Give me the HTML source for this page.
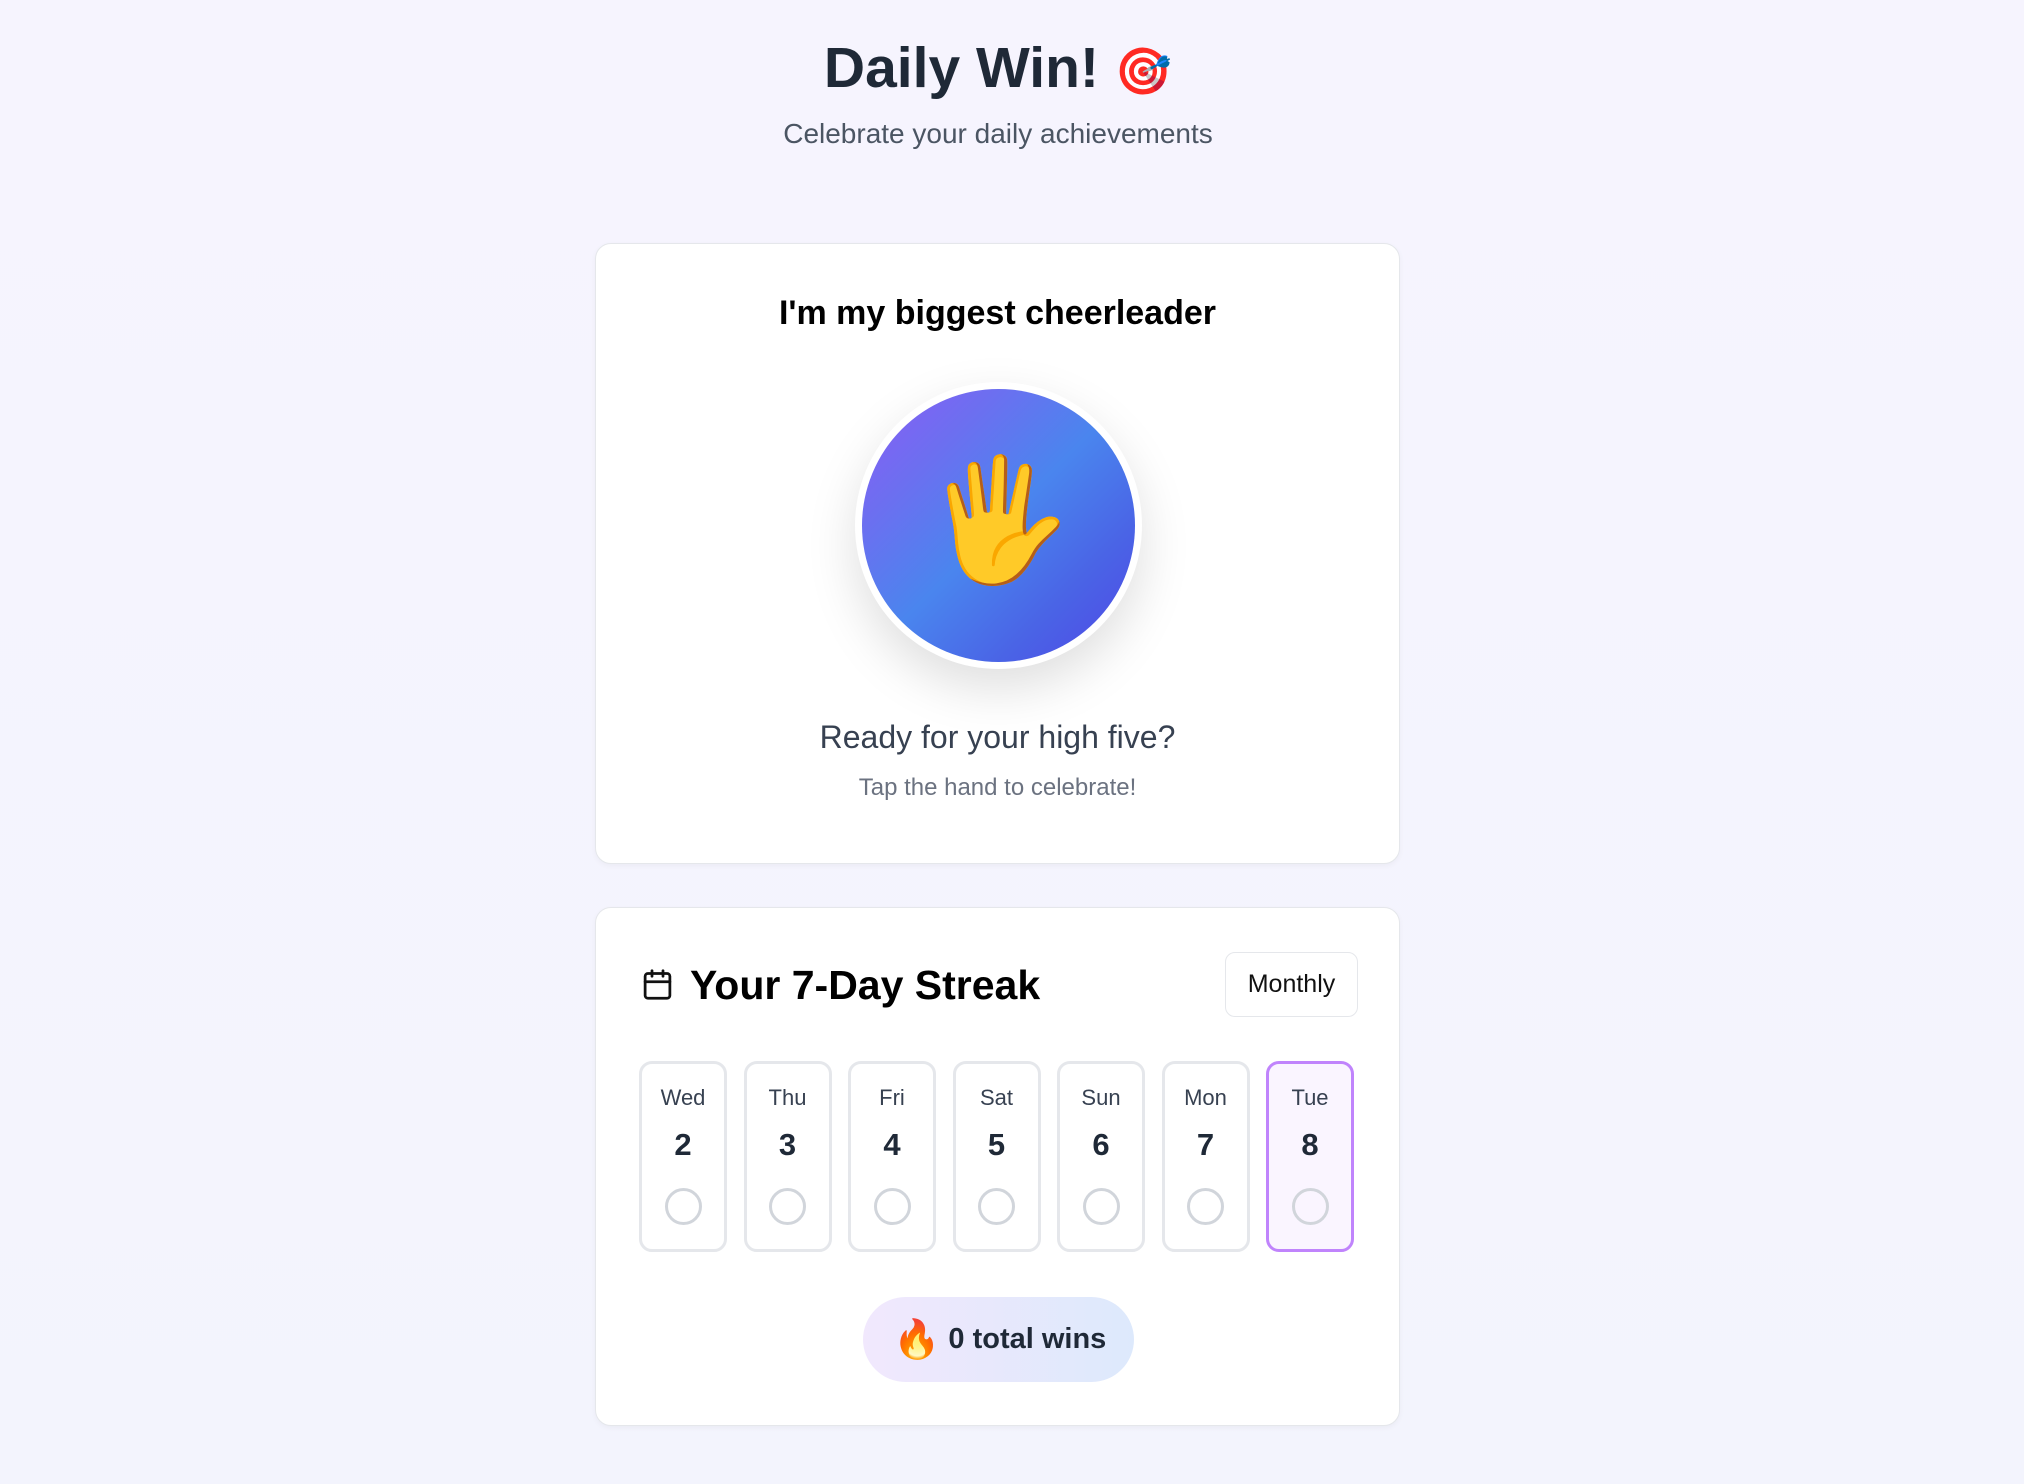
<!DOCTYPE html>
<html><head><meta charset="utf-8"><style>
*{box-sizing:border-box;margin:0;padding:0}
html,body{width:2024px;height:1484px;overflow:hidden}
body{background:linear-gradient(180deg,#f6f4fe 0%,#f3f4fd 100%);font-family:"Liberation Sans","Noto Sans CJK JP",sans-serif;position:relative}
.abs{position:absolute}
.c{text-align:center}
.card{position:absolute;left:595px;width:805px;background:#fff;border:1.5px solid #e5e7eb;border-radius:16px;box-shadow:0 2px 6px rgba(0,0,0,0.04)}
.cell{position:absolute;top:153px;width:88px;height:191px;border:3px solid #e5e7eb;border-radius:13px;background:#fff}
.cell .d{position:absolute;top:21px;width:100%;text-align:center;font-size:22px;color:#374151}
.cell .n{position:absolute;top:63px;width:100%;text-align:center;font-size:31px;font-weight:bold;color:#1f2937}
.cell .o{position:absolute;top:124px;left:50%;margin-left:-18.5px;width:37px;height:37px;border:3px solid #d1d5db;border-radius:50%}
</style></head><body>
<div class="abs c" style="left:0;width:1996px;top:32px;font-size:57px;font-weight:bold;color:#1f2937;line-height:72px">Daily Win! <span style="font-size:46px">🎯</span></div>
<div class="abs c" style="left:0;width:1996px;top:117px;font-size:28px;color:#4b5563;line-height:34px">Celebrate your daily achievements</div>

<div class="card" style="top:243px;height:621px">
  <div class="abs c" style="left:0;width:100%;top:48px;font-size:34px;font-weight:bold;color:#000;line-height:42px">I'm my biggest cheerleader</div>
  <div class="abs" style="left:259px;top:138px;width:287px;height:287px;border-radius:50%;background:#fff;box-shadow:0 20px 50px rgba(0,0,0,0.13)"></div>
  <div class="abs" style="left:266px;top:145px;width:273px;height:273px;border-radius:50%;background:linear-gradient(135deg,#8b5cf6 0%,#6c6ff0 25%,#4a85ee 50%,#4a64e6 75%,#4f46e5 100%)"></div>
  <div class="abs c" style="left:266px;top:140px;width:273px;height:273px;line-height:273px;font-size:120px">🖐</div>
  <div class="abs c" style="left:0;width:100%;top:474px;font-size:32px;color:#374151;line-height:38px">Ready for your high five?</div>
  <div class="abs c" style="left:0;width:100%;top:529px;font-size:24px;color:#6b7280;line-height:30px">Tap the hand to celebrate!</div>
</div>

<div class="card" style="top:907px;height:519px">
  <svg class="abs" style="left:45px;top:59px" width="33" height="35" viewBox="0 0 24 24" fill="none" stroke="#111" stroke-width="2" stroke-linecap="round" stroke-linejoin="round"><rect x="3" y="4" width="18" height="18" rx="2"/><line x1="16" y1="2" x2="16" y2="6"/><line x1="8" y1="2" x2="8" y2="6"/><line x1="3" y1="10" x2="21" y2="10"/></svg>
  <div class="abs" style="left:94px;top:52px;font-size:41px;font-weight:bold;color:#000;line-height:50px">Your 7-Day Streak</div>
  <div class="abs c" style="left:629px;top:44px;width:133px;height:65px;border:1.5px solid #e5e7eb;border-radius:10px;font-size:25px;line-height:62px;color:#111">Monthly</div>
  <div class="cell" style="left:43px"><div class="d">Wed</div><div class="n">2</div><div class="o"></div></div>
  <div class="cell" style="left:147.5px"><div class="d">Thu</div><div class="n">3</div><div class="o"></div></div>
  <div class="cell" style="left:252px"><div class="d">Fri</div><div class="n">4</div><div class="o"></div></div>
  <div class="cell" style="left:356.5px"><div class="d">Sat</div><div class="n">5</div><div class="o"></div></div>
  <div class="cell" style="left:461px"><div class="d">Sun</div><div class="n">6</div><div class="o"></div></div>
  <div class="cell" style="left:565.5px"><div class="d">Mon</div><div class="n">7</div><div class="o"></div></div>
  <div class="cell" style="left:670px;border-color:#c084fc;background:#faf5ff"><div class="d">Tue</div><div class="n">8</div><div class="o"></div></div>
  <div class="abs" style="left:267px;top:389px;width:271px;height:85px;border-radius:43px;background:linear-gradient(90deg,#f1e8fd,#dde9fc);font-size:29px;font-weight:bold;color:#1f2937;line-height:85px;padding-left:30px"><span style="font-size:38px;vertical-align:-4px">🔥</span>&nbsp;0 total wins</div>
</div>
</body></html>
